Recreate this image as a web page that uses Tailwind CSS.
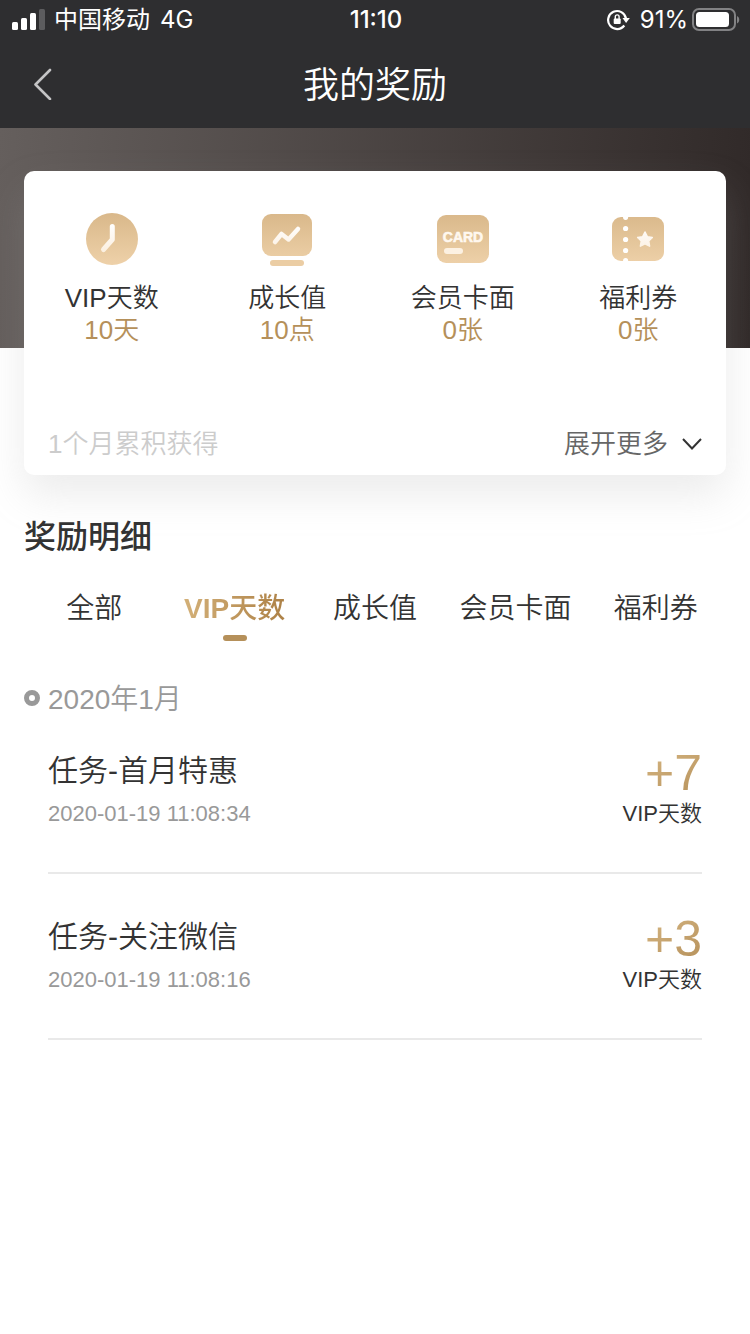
<!DOCTYPE html>
<html lang="zh-CN">
<head>
<meta charset="utf-8">
<meta name="viewport" content="width=device-width, initial-scale=1">
<title>我的奖励</title>
<script src="https://cdn.jsdelivr.net/npm/@tailwindcss/browser@4"></script>
</head>
<body class="min-h-screen bg-white font-['Liberation_Sans','Noto_Sans_CJK_SC',sans-serif] font-[350] text-[#333333]">
<svg class="absolute size-0" aria-hidden="true">
  <defs>
    <linearGradient id="gold" gradientUnits="userSpaceOnUse" x1="0" y1="0" x2="0" y2="52"><stop stop-color="#d9b88a"/><stop offset="1" stop-color="#eed1a9"/></linearGradient>
    <linearGradient id="pale" gradientUnits="userSpaceOnUse" x1="0" y1="10" x2="0" y2="42"><stop stop-color="#ffffff"/><stop offset="1" stop-color="#fbeedd"/></linearGradient>
  </defs>
</svg>

<div class="bg-[#2e2e30] text-white">
  <div class="grid h-10 grid-cols-[1fr_auto_1fr] items-center pr-2.5 pl-3 font-['Inter','Noto_Sans_CJK_SC',sans-serif] text-2xl leading-10 font-normal">
    <div class="flex items-center gap-2">
      <svg class="h-[22px] w-[34px]" viewBox="0 0 34 22" fill="#fff" aria-hidden="true">
        <rect x="0" y="13" width="6" height="8" rx="1.5"/><rect x="9" y="9" width="6" height="12" rx="1.5"/><rect x="18" y="4" width="6" height="17" rx="1.5"/><rect x="27" y="0" width="6" height="21" rx="1.5" fill="#5c5c5e"/>
      </svg>
      <span>中国移动</span>
      <span class="ml-0.5">4G</span>
    </div>
    <div class="font-medium">11:10</div>
    <div class="flex items-center justify-end">
      <svg class="mr-2.5 h-[22px] w-6" viewBox="0 0 24 22" aria-hidden="true">
        <path d="M18.3 16.500 A9 9 0 1 1 20 9.500" fill="none" stroke="#fff" stroke-width="2.200"/>
        <path d="M16.500 9h7.300l-3.700 5z" fill="#fff"/>
        <rect x="7.700" y="9.500" width="7" height="5.500" rx="1" fill="#fff"/>
        <path d="M9.300 10V7.800a1.900 1.900 0 0 1 3.800 0V10" fill="none" stroke="#fff" stroke-width="1.400"/>
      </svg>
      <span class="mr-1">91%</span>
      <svg class="h-6 w-12" viewBox="0 0 48 24" aria-hidden="true">
        <rect x="1" y="1" width="42" height="21" rx="6" fill="none" stroke="#828284" stroke-width="2"/>
        <rect x="4" y="4" width="33" height="15" rx="3.500" fill="#fff"/>
        <path d="M45 8c3 1.500 3 6 0 7.500z" fill="#828284"/>
      </svg>
    </div>
  </div>
  <header class="grid h-[88px] grid-cols-[1fr_auto_1fr] items-center px-6">
    <button type="button" aria-label="返回" class="flex h-16 w-12 items-center pl-2">
      <svg class="h-8 w-5" viewBox="0 0 20 32" fill="none" stroke="#c4c4c5" stroke-width="2.600" stroke-linecap="round" stroke-linejoin="round" aria-hidden="true"><path d="M18 2 3.500 16.500 18 31"/></svg>
    </button>
    <h1 class="pt-1 text-4xl leading-[48px]">我的奖励</h1>
  </header>
</div>

<main>
  <section class="bg-[linear-gradient(95deg,#655f5d,#302928)] bg-[length:100%_220px] bg-no-repeat px-6 pt-[43px]" aria-label="奖励汇总">
    <div class="rounded-[10px] bg-white pt-[42px] pb-[15px] shadow-[0_20px_40px_rgba(170,170,170,0.22)]">
      <ul class="grid grid-cols-4 text-center text-[26px] leading-8">
        <li class="flex flex-col items-center">
          <svg class="mb-[17px] size-[52px]" viewBox="0 0 52 52" aria-hidden="true"><circle cx="26" cy="26" r="26" fill="url(#gold)"/><path d="M26.300 13.500V26.500L17.500 36.500" fill="none" stroke="url(#pale)" stroke-width="5" stroke-linecap="round" stroke-linejoin="round"/></svg>
          <span>VIP天数</span><span class="text-[#b5905a]">10天</span>
        </li>
        <li class="flex flex-col items-center">
          <svg class="mb-[17px] size-[52px] overflow-visible" viewBox="0 0 52 52" aria-hidden="true"><rect x="1" y="1" width="50" height="42" rx="9" fill="url(#gold)"/><path d="M14 29 20.500 21 27.500 26.500 37 16" fill="none" stroke="url(#pale)" stroke-width="4.500" stroke-linecap="round" stroke-linejoin="round"/><rect x="9" y="47" width="34" height="6" rx="3" fill="#ebcda4"/></svg>
          <span>成长值</span><span class="text-[#b5905a]">10点</span>
        </li>
        <li class="flex flex-col items-center">
          <svg class="mb-[17px] size-[52px]" viewBox="0 0 52 52" aria-hidden="true"><rect x="0" y="2" width="52" height="48" rx="9" fill="url(#gold)"/><text x="26" y="29" text-anchor="middle" class="font-['Liberation_Sans_Narrow','Liberation_Sans',sans-serif] text-[14px] font-bold" fill="#fff8ef" stroke="#fff8ef" stroke-width="0.600">CARD</text><rect x="7" y="35" width="19" height="6" rx="3" fill="#fcf1e2"/></svg>
          <span>会员卡面</span><span class="text-[#b5905a]">0张</span>
        </li>
        <li class="flex flex-col items-center">
          <svg class="mb-[17px] size-[52px]" viewBox="0 0 52 52" aria-hidden="true"><rect x="0" y="4" width="52" height="44" rx="9" fill="url(#gold)"/><g fill="#fff"><path d="M11 4a2.600 3 0 0 0 5.200 0zM11 48a2.600 3 0 0 1 5.200 0z"/><circle cx="13.600" cy="15.500" r="2.600"/><circle cx="13.600" cy="26.500" r="2.600"/><circle cx="13.600" cy="37.500" r="2.600"/></g><path d="M33 19 35.300 23.700 40.300 24.400 36.700 28 37.600 33.200 33 30.800 28.400 33.200 29.300 28 25.700 24.400 30.700 23.700Z" fill="url(#pale)" stroke="url(#pale)" stroke-width="1.500" stroke-linejoin="round"/></svg>
          <span>福利券</span><span class="text-[#b5905a]">0张</span>
        </li>
      </ul>
      <div class="mt-[82px] flex items-center justify-between px-6 text-[26px] leading-8">
        <p class="text-[#cccccc]">1个月累积获得</p>
        <button type="button" class="flex items-center gap-3.5 text-[#666666]">展开更多
          <svg class="h-3 w-5" viewBox="0 0 20 12" fill="none" stroke="#333" stroke-width="2" aria-hidden="true"><path d="M1 1 10 10.500 19 1"/></svg>
        </button>
      </div>
    </div>
  </section>

  <section class="px-6 pt-[42px]">
    <h2 class="text-[32px] leading-10 font-medium">奖励明细</h2>
    <nav class="mt-8 grid grid-cols-5 text-center text-[28px] leading-10" aria-label="奖励类型">
      <a href="#all">全部</a>
      <a href="#vip" aria-current="page" class="flex flex-col items-center font-bold"><span class="bg-linear-to-r from-[#d3b078] to-[#ad8146] bg-clip-text text-transparent">VIP<span class="font-medium">天数</span></span><span class="mt-1.5 h-1.5 w-6 rounded-full bg-[#b5905a]"></span></a>
      <a href="#growth">成长值</a>
      <a href="#card">会员卡面</a>
      <a href="#coupon">福利券</a>
    </nav>

    <h3 class="mt-[39px] flex items-center gap-2 text-[28px] leading-10 text-[#999999]"><span class="mb-1 size-4 rounded-full border-5 border-[#999999]"></span>2020年1月</h3>
    <ul class="px-6">
      <li class="flex items-start justify-between border-b-2 border-[#e9e9e9] pt-7 pb-[42px]">
        <div class="pt-[3px]"><h4 class="text-[30px] leading-10">任务-首月特惠</h4><time class="mt-[7px] block text-[22px] leading-8 text-[#999999]">2020-01-19 11:08:34</time></div>
        <div class="text-right"><p class="bg-linear-to-br from-[#dcbd89] to-[#b5905a] bg-clip-text text-[50px] leading-[50px] text-transparent">+7</p><p class="text-[22px] leading-8">VIP天数</p></div>
      </li>
      <li class="flex items-start justify-between border-b-2 border-[#e9e9e9] pt-10 pb-[42px]">
        <div class="pt-[3px]"><h4 class="text-[30px] leading-10">任务-关注微信</h4><time class="mt-[7px] block text-[22px] leading-8 text-[#999999]">2020-01-19 11:08:16</time></div>
        <div class="text-right"><p class="bg-linear-to-br from-[#dcbd89] to-[#b5905a] bg-clip-text text-[50px] leading-[50px] text-transparent">+3</p><p class="text-[22px] leading-8">VIP天数</p></div>
      </li>
    </ul>
  </section>
</main>
</body>
</html>
